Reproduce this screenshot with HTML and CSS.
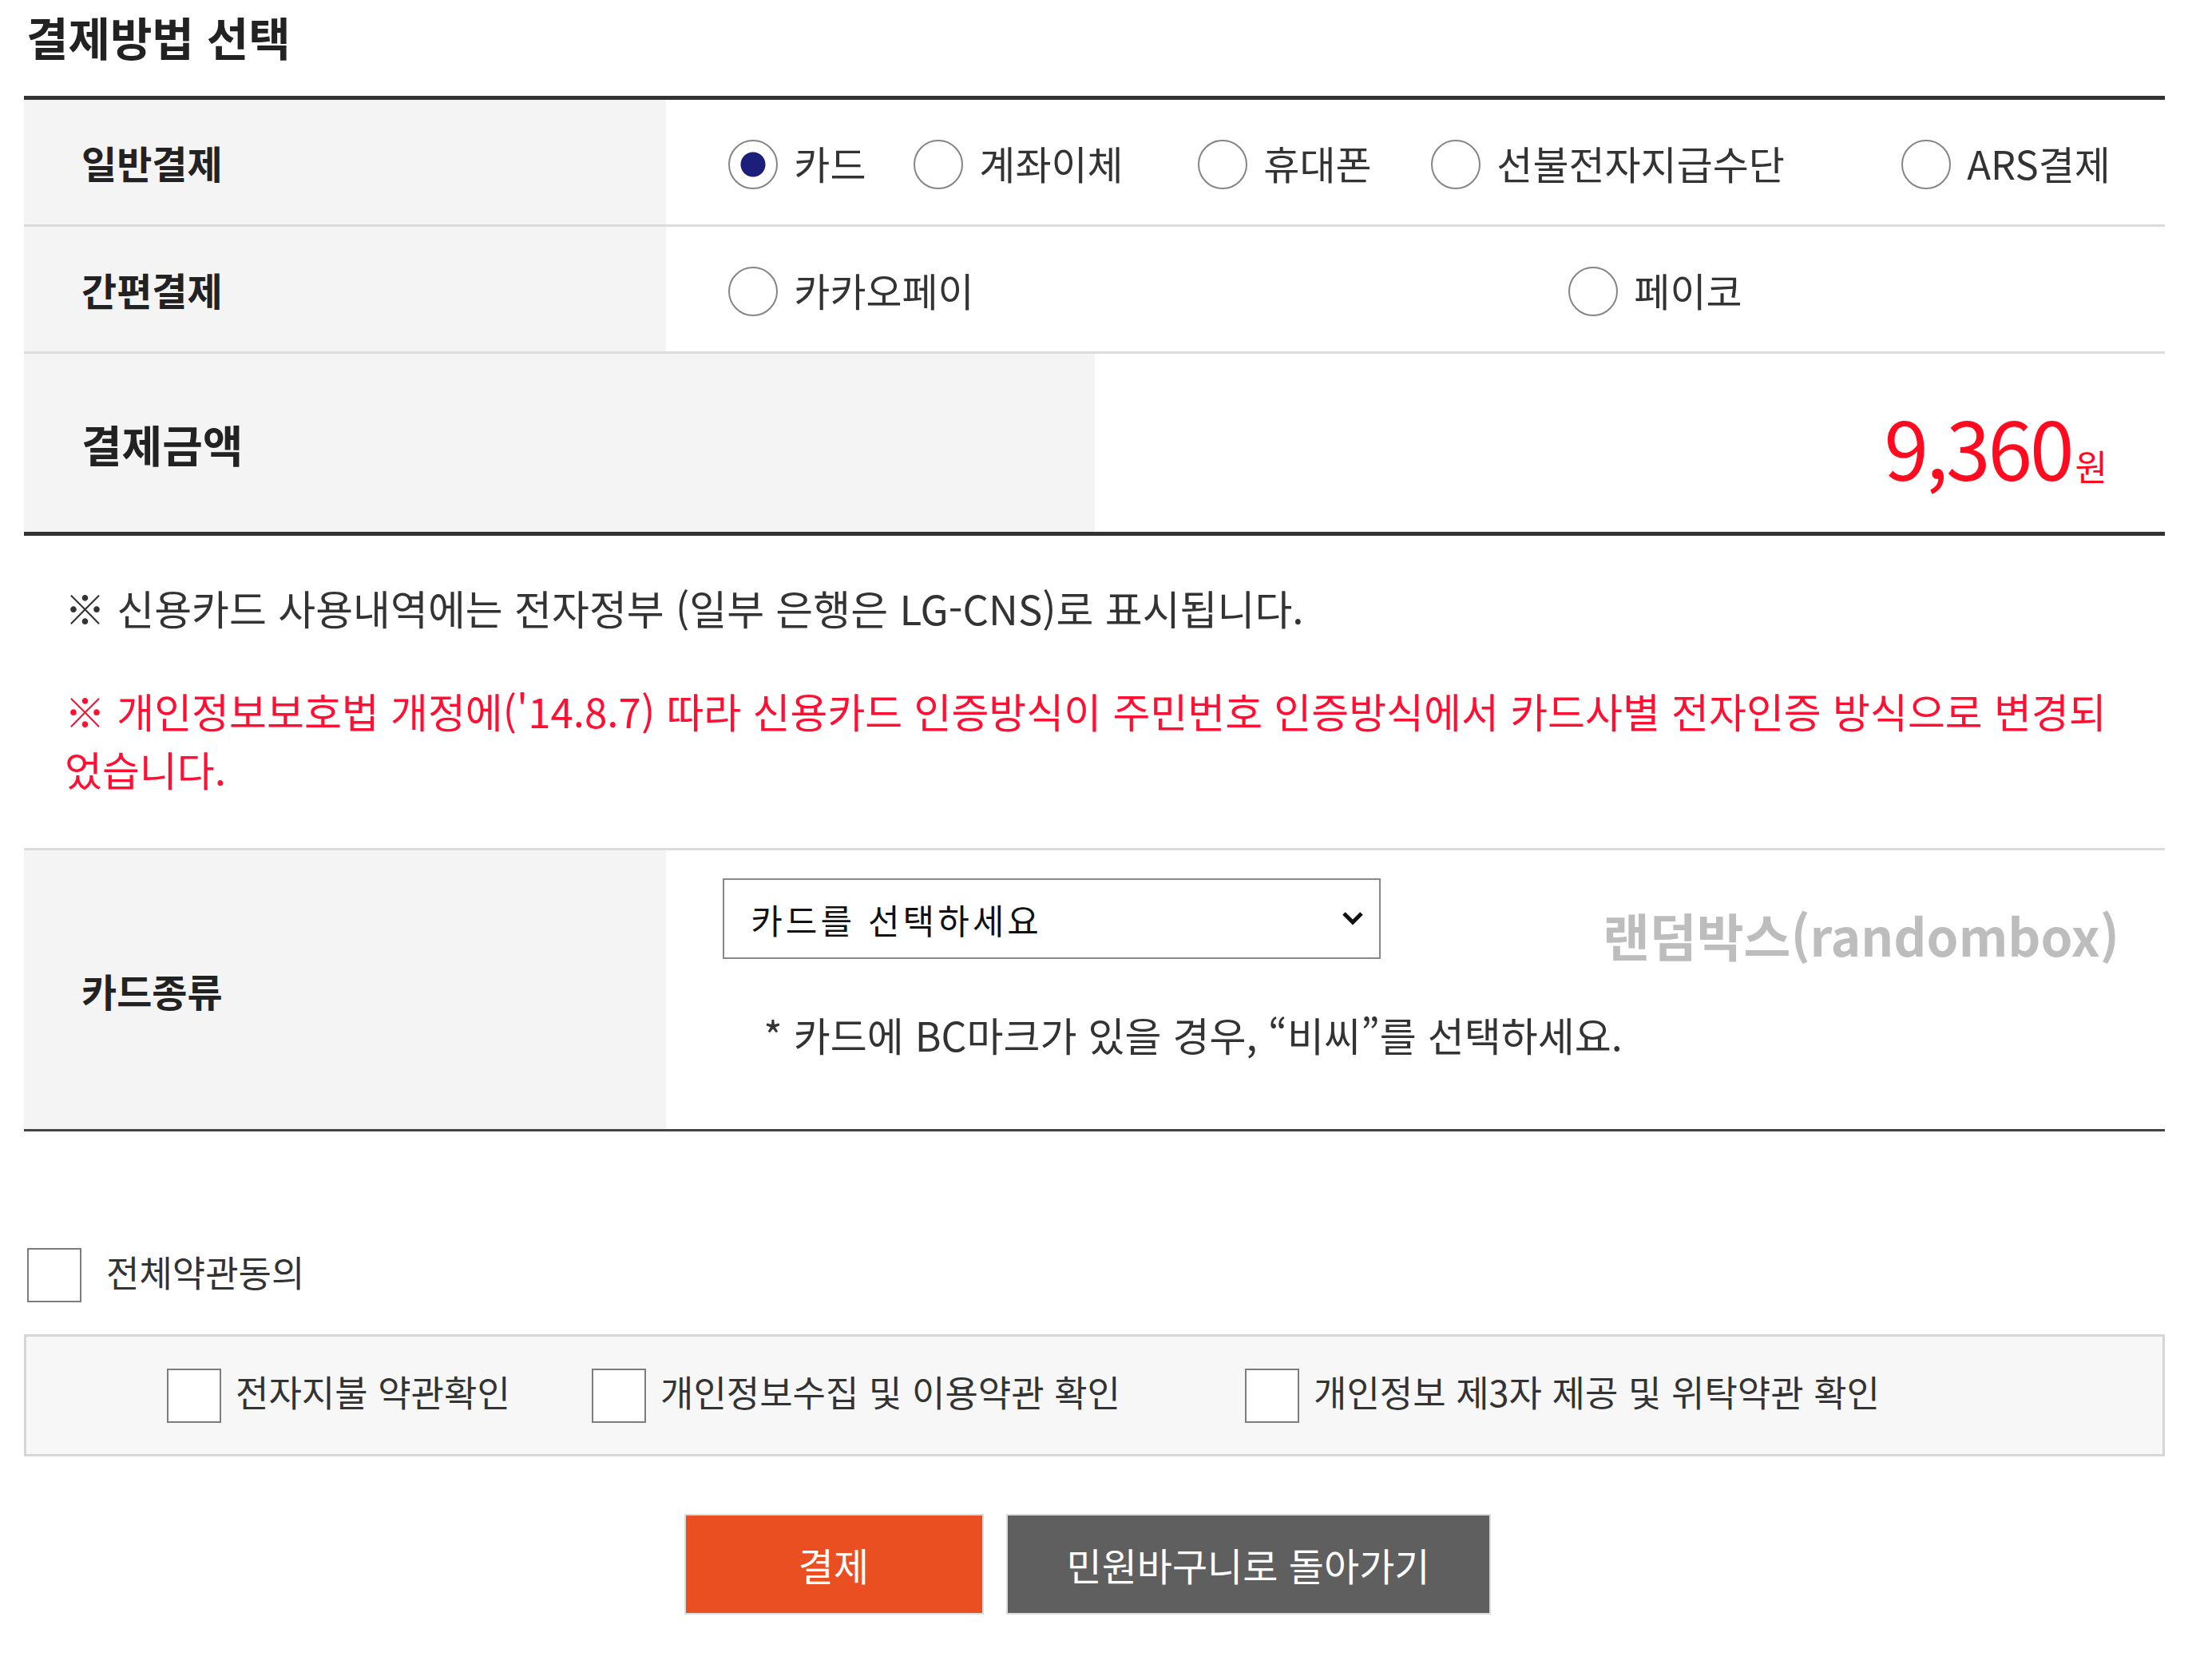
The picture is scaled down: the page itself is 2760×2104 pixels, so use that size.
FILE: index.html
```html
<!DOCTYPE html>
<html lang="ko">
<head>
    <meta charset="UTF-8">
    <meta name="viewport" content="width=device-width, initial-scale=1.0">
    <title>결제방법 선택</title>

    <link rel="stylesheet" href="styles.css">
</head>
<body>
    <div class="container">
        <h2 class="sec-title">결제방법 선택</h2>

        <!-- 결제수단 -->
        <div class="pay-table">
            <div class="pay-row">
                <div class="th">일반결제</div>
                <div class="td methods">
                    <label class="opt"><input type="radio" name="payType" checked><span>카드</span></label>
                    <label class="opt"><input type="radio" name="payType"><span>계좌이체</span></label>
                    <label class="opt"><input type="radio" name="payType"><span>휴대폰</span></label>
                    <label class="opt"><input type="radio" name="payType"><span>선불전자지급수단</span></label>
                    <label class="opt"><input type="radio" name="payType"><span>ARS결제</span></label>
                </div>
            </div>
            <div class="pay-row">
                <div class="th">간편결제</div>
                <div class="td methods methods-easy">
                    <label class="opt"><input type="radio" name="payType"><span>카카오페이</span></label>
                    <label class="opt"><input type="radio" name="payType"><span>페이코</span></label>
                </div>
            </div>
            <div class="pay-row amount-row">
                <div class="th th-lg">결제금액</div>
                <div class="td amount"><span class="num">9,360</span><span class="won">원</span></div>
            </div>
        </div>

        <div class="notice">
            <p>※ 신용카드 사용내역에는 전자정부 (일부 은행은 LG-CNS)로 표시됩니다.</p>
            <p class="red">※ 개인정보보호법 개정에('14.8.7) 따라 신용카드 인증방식이 주민번호 인증방식에서 카드사별 전자인증 방식으로 변경되<br>었습니다.</p>
        </div>

        <!-- 카드종류 -->
        <div class="card-table">
            <div class="th">카드종류</div>
            <div class="td card-cell">
                <div class="select-box">
                    <select id="cardType">
                        <option>카드를 선택하세요</option>
                        <option>비씨</option>
                        <option>국민</option>
                        <option>신한</option>
                        <option>삼성</option>
                        <option>현대</option>
                        <option>롯데</option>
                        <option>하나</option>
                        <option>농협</option>
                    </select>
                    <svg class="chev" viewBox="0 0 28 18" width="28" height="18"><path d="M3 3 L14 14 L25 3" fill="none" stroke="#111" stroke-width="5"/></svg>
                </div>
                <p class="hint">* 카드에 BC마크가 있을 경우, “비씨”를 선택하세요.</p>
                <span class="watermark">랜덤박스(randombox)</span>
            </div>
        </div>

        <!-- 약관동의 -->
        <label class="agree-all"><input type="checkbox" id="agreeAll"><span>전체약관동의</span></label>
        <div class="agree-box">
            <label class="chk"><input type="checkbox" class="agree-item"><span>전자지불 약관확인</span></label>
            <label class="chk"><input type="checkbox" class="agree-item"><span>개인정보수집 및 이용약관 확인</span></label>
            <label class="chk"><input type="checkbox" class="agree-item"><span>개인정보 제3자 제공 및 위탁약관 확인</span></label>
        </div>

        <div class="btns">
            <button class="btn btn-pay">결제</button>
            <button class="btn btn-back">민원바구니로 돌아가기</button>
        </div>
    </div>

    <script>
        // 전체동의 체크 -> 개별 항목 전부 체크
        var agreeAll = document.getElementById("agreeAll");
        var items = document.querySelectorAll(".agree-item");
        agreeAll.onchange = function() {
            for (var i = 0; i < items.length; i++) {
                items[i].checked = agreeAll.checked;
            }
        };
    </script>
</body>
</html>
```

FILE: styles.css
```css
* {
    box-sizing: border-box;
}
body {
    margin: 0;
    background-color: #fff;
    color: #333;
    font-family: "Noto Sans CJK KR", "Noto Sans", sans-serif;
}
.container {
    padding: 0 49px 0 30px;
}
.sec-title {
    margin: 0 0 30px 3px;
    font-size: 57px;
    line-height: 90px;
    font-weight: bold;
    color: #222;
}

/* table rows */
.pay-table {
    border-top: 5px solid #333;
    border-bottom: 5px solid #333;
}
.pay-row {
    display: grid;
    grid-template-columns: 30% 1fr;
    height: 159px;
    border-bottom: 3px solid #dcdcdc;
}
.amount-row {
    grid-template-columns: 50% 50%;
    height: 223px;
    border-bottom: none;
}
.th {
    display: flex;
    align-items: center;
    padding-left: 72px;
    background-color: #f4f4f4;
    font-size: 48px;
    font-weight: bold;
    color: #222;
}
.th-lg {
    font-size: 55px;
}
.td {
    display: flex;
    align-items: center;
}
.methods {
    display: grid;
    grid-template-columns: 232px 356px 292px 589px auto;
    padding-left: 78px;
}
.methods-easy {
    grid-template-columns: 1052px auto;
}
.opt {
    display: flex;
    align-items: center;
    gap: 20px;
    font-size: 49px;
    color: #333;
    cursor: pointer;
}
.opt input {
    appearance: none;
    -webkit-appearance: none;
    flex: none;
    width: 62px;
    height: 62px;
    margin: 6px 0 0 0;
    border: 2px solid #858585;
    border-radius: 50%;
    background-color: #fff;
}
.opt input:checked {
    background: radial-gradient(circle, #1b1f7a 0 15px, #fff 16px);
}
.amount {
    justify-content: flex-end;
    align-items: baseline;
    padding: 66px 72px 0 0;
    color: #ff0a1e;
    line-height: 1;
}
.num {
    font-size: 100px;
    letter-spacing: -3px;
}
.won {
    font-size: 44px;
    margin-left: 4px;
}

/* notices */
.notice {
    padding: 54px 0 62px 51px;
    font-size: 51px;
    line-height: 73px;
    color: #333;
}
.notice p {
    margin: 0;
}
.notice p + p {
    margin-top: 56px;
}
.notice .red {
    color: #ff0f32;
}

/* card select */
.card-table {
    display: grid;
    grid-template-columns: 30% 1fr;
    height: 355px;
    border-top: 3px solid #dcdcdc;
    border-bottom: 3px solid #444;
}
.card-cell {
    position: relative;
    flex-direction: column;
    align-items: flex-start;
    padding: 35px 0 0 71px;
}
.select-box {
    position: relative;
    width: 824px;
    height: 101px;
}
.select-box select {
    appearance: none;
    -webkit-appearance: none;
    width: 100%;
    height: 100%;
    padding: 0 70px 0 33px;
    border: 2px solid #888;
    border-radius: 0;
    background-color: #fff;
    font-family: "Noto Sans CJK KR", sans-serif;
    font-size: 43px;
    letter-spacing: 4px;
    color: #111;
}
.chev {
    position: absolute;
    right: 21px;
    top: 41px;
    pointer-events: none;
}
.hint {
    margin: 58px 0 0 51px;
    font-size: 50px;
    line-height: 73px;
    color: #333;
}
.watermark {
    position: absolute;
    right: 57px;
    top: 74px;
    font-size: 64px;
    line-height: 62px;
    font-weight: bold;
    color: #bdbdbd;
}

/* agreement */
.agree-all {
    display: flex;
    align-items: center;
    gap: 31px;
    margin: 146px 0 40px 4px;
    font-size: 45px;
    line-height: 1;
    color: #333;
}
.agree-all input,
.chk input {
    appearance: none;
    -webkit-appearance: none;
    flex: none;
    width: 68px;
    height: 68px;
    margin: 0;
    border: 2px solid #7d7d7d;
    border-radius: 0;
    background-color: #fff;
}
.agree-all input:checked,
.chk input:checked {
    background-color: #1b1f7a;
}
.agree-all span,
.chk span {
    padding-bottom: 10px;
}
.agree-box {
    display: grid;
    grid-template-columns: 532px 818px auto;
    align-items: center;
    height: 153px;
    padding-left: 176px;
    border: 3px solid #d6d6d6;
    background-color: #f7f7f7;
}
.chk {
    display: flex;
    align-items: center;
    gap: 18px;
    font-size: 45px;
    line-height: 1;
    color: #333;
}

/* buttons */
.btns {
    display: flex;
    justify-content: center;
    gap: 28px;
    margin-top: 72px;
    padding-right: 18px;
}
.btn {
    height: 126px;
    border: 2px solid #dcdcdc;
    border-radius: 0;
    font-family: "Noto Sans CJK KR", sans-serif;
    font-size: 48px;
    color: #fff;
    cursor: pointer;
}
.btn-pay {
    width: 375px;
    background-color: #ea4f21;
}
.btn-back {
    width: 607px;
    background-color: #5f5f5f;
}
```
